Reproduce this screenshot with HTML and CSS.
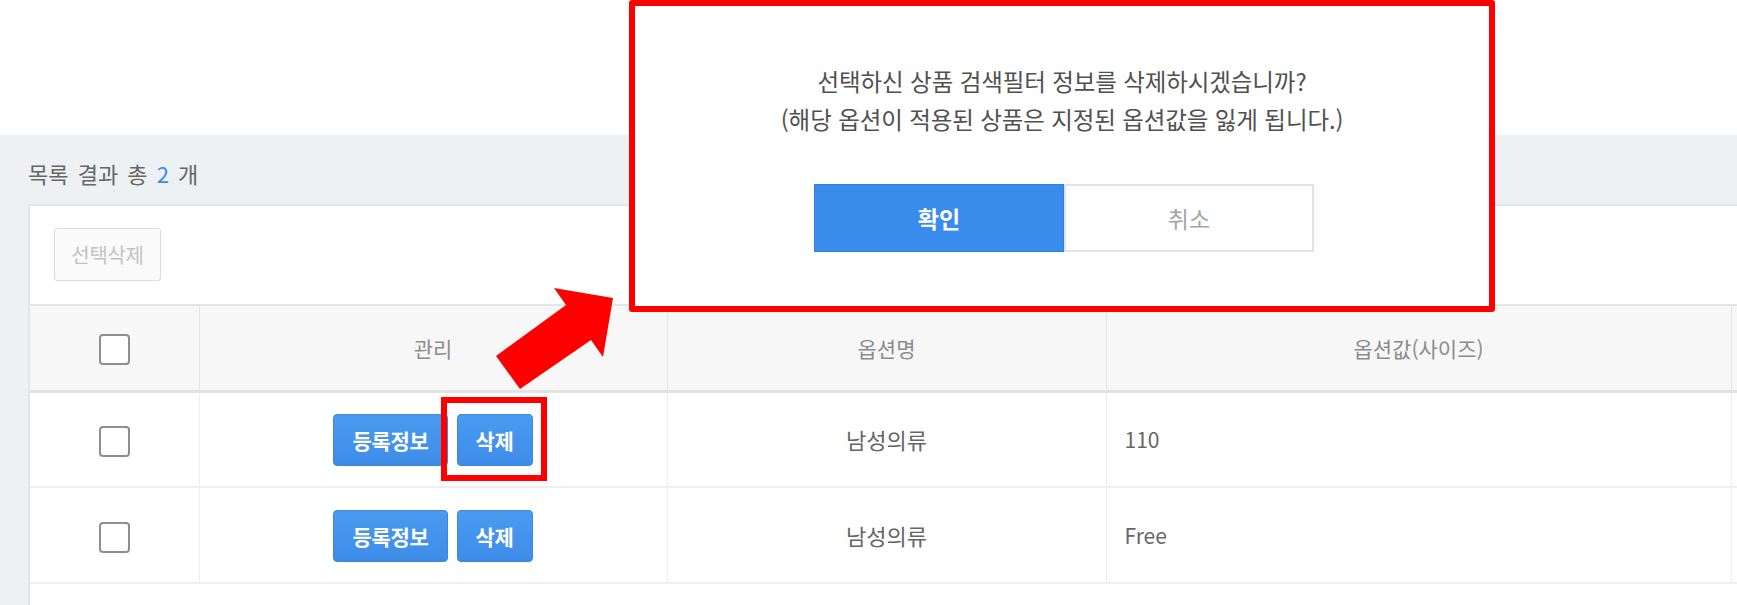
FILE: index.html
```html
<!DOCTYPE html>
<html lang="ko">
<head>
<meta charset="utf-8">
<title>옵션 목록</title>
<link rel="stylesheet" href="styles.css">
</head>
<body>
<div class="page">
  <div class="topbar"></div>
  <div class="main">
    <div class="result">목록 결과 총 <span class="count">2</span> 개</div>
    <div class="card">
      <div class="toolbar">
        <button class="btn-disabled" type="button">선택삭제</button>
      </div>
      <table class="grid">
        <colgroup>
          <col class="c-check">
          <col class="c-manage">
          <col class="c-name">
          <col class="c-value">
          <col class="c-rest">
        </colgroup>
        <thead>
          <tr>
            <th><span class="check"></span></th>
            <th>관리</th>
            <th>옵션명</th>
            <th>옵션값(사이즈)</th>
            <th></th>
          </tr>
        </thead>
        <tbody>
          <tr>
            <td class="center"><span class="check"></span></td>
            <td class="center">
              <div class="actions">
                <button class="btn-blue" type="button">등록정보</button>
                <button class="btn-blue" type="button">삭제</button>
              </div>
            </td>
            <td class="center">남성의류</td>
            <td class="left">110</td>
            <td></td>
          </tr>
          <tr>
            <td class="center"><span class="check"></span></td>
            <td class="center">
              <div class="actions">
                <button class="btn-blue" type="button">등록정보</button>
                <button class="btn-blue" type="button">삭제</button>
              </div>
            </td>
            <td class="center">남성의류</td>
            <td class="left">Free</td>
            <td></td>
          </tr>
        </tbody>
      </table>
    </div>
  </div>

  <div class="dialog">
    <p class="dialog-msg">선택하신 상품 검색필터 정보를 삭제하시겠습니까?<br>(해당 옵션이 적용된 상품은 지정된 옵션값을 잃게 됩니다.)</p>
    <div class="dialog-btns">
      <button class="btn-ok" type="button">확인</button>
      <button class="btn-cancel" type="button">취소</button>
    </div>
  </div>

  <div class="highlight"></div>

  <svg class="arrow" width="1737" height="605" viewBox="0 0 1737 605" aria-hidden="true">
    <polygon points="613,298 554,288 566,305 496,356 520,389 591,340 603,357" fill="#ff0000"/>
  </svg>
</div>
</body>
</html>
```
FILE: styles.css
```css
* { box-sizing: border-box; }

html, body {
  margin: 0;
  padding: 0;
  background: #ffffff;
  overflow: hidden;
}

body {
  font-family: "Noto Sans CJK KR", "Noto Sans", sans-serif;
  color: #666;
}

.page {
  position: relative;
  width: 1737px;
  height: 605px;
  overflow: hidden;
}

.topbar {
  height: 135px;
  background: #ffffff;
}

.main {
  background: #eef1f4;
  height: 470px;
  padding: 20px 0 0 28px;
}

.result {
  font-size: 22px;
  line-height: 36px;
  color: #666;
  height: 49px;
  word-spacing: 3px;
}

.result .count {
  color: #3b8beb;
}

.card {
  width: 1800px;
  background: #ffffff;
  border: 2px solid #e4e7ea;
  border-right: none;
  min-height: 420px;
}

.toolbar {
  padding: 22px 24px 23px;
}

.btn-disabled {
  width: 107px;
  height: 53px;
  border: 1px solid #dcdcdc;
  border-radius: 3px;
  background: #fafafa;
  color: #c2c2c2;
  font-family: inherit;
  font-size: 20px;
  padding: 0;
  letter-spacing: -0.3px;
}

.grid {
  border-collapse: collapse;
  table-layout: fixed;
  width: 1800px;
}

.c-check { width: 169px; }
.c-manage { width: 468px; }
.c-name { width: 439px; }
.c-value { width: 625px; }
.c-rest { width: 99px; }

.grid thead tr {
  height: 86px;
  background: #f7f7f7;
  border-top: 2px solid #e6e6e6;
  border-bottom: 3px solid #e2e2e2;
}

.grid th {
  font-weight: normal;
  font-size: 21px;
  color: #8c8c8c;
  text-align: center;
  border-left: 1px solid #e6e6e6;
  padding: 0;
  vertical-align: middle;
}

.grid th:first-child,
.grid td:first-child { border-left: none; }

.grid tbody tr {
  height: 96px;
  border-bottom: 2px solid #efefef;
}

.grid td {
  font-size: 22px;
  color: #666;
  border-left: 1px solid #ededed;
  padding: 0;
  vertical-align: middle;
}

.grid td.center { text-align: center; }
.grid td.left { text-align: left; padding-left: 18px; font-size: 21px; }

.check {
  display: inline-block;
  width: 31px;
  height: 31px;
  border: 2px solid #8e8e8e;
  border-radius: 4px;
  background: #fff;
  vertical-align: middle;
}

.actions {
  display: flex;
  justify-content: center;
  gap: 9px;
  padding-top: 2px;
}

.btn-blue {
  height: 52px;
  padding: 0 18px;
  border: 1px solid #3a88e2;
  border-radius: 4px;
  background: linear-gradient(#4a9bf1, #3d8ce8);
  color: #ffffff;
  font-family: inherit;
  font-size: 21px;
  font-weight: bold;
  letter-spacing: -0.3px;
}

/* dialog */
.dialog {
  position: absolute;
  left: 629px;
  top: 0;
  width: 866px;
  height: 312px;
  background: #ffffff;
  border: 6px solid #ff0000;
  border-radius: 3px;
  padding-top: 56px;
  text-align: center;
}

.dialog-msg {
  margin: 0;
  font-size: 23.5px;
  line-height: 38px;
  color: #505050;
  letter-spacing: -0.1px;
}

.dialog-btns {
  display: flex;
  justify-content: center;
  margin-top: 46px;
  padding-left: 4px;
}

.btn-ok,
.btn-cancel {
  width: 250px;
  height: 68px;
  font-family: inherit;
  font-size: 23px;
  padding: 0;
}

.btn-ok {
  background: #3a8cec;
  border: 1px solid #2f7fdc;
  color: #ffffff;
  font-weight: bold;
}

.btn-cancel {
  background: #ffffff;
  border: 2px solid #e3e3e3;
  color: #a5a5a5;
}

.highlight {
  position: absolute;
  left: 441px;
  top: 397px;
  width: 106px;
  height: 84px;
  border: 6px solid #ff0000;
}

.arrow {
  position: absolute;
  left: 0;
  top: 0;
  pointer-events: none;
}
```
